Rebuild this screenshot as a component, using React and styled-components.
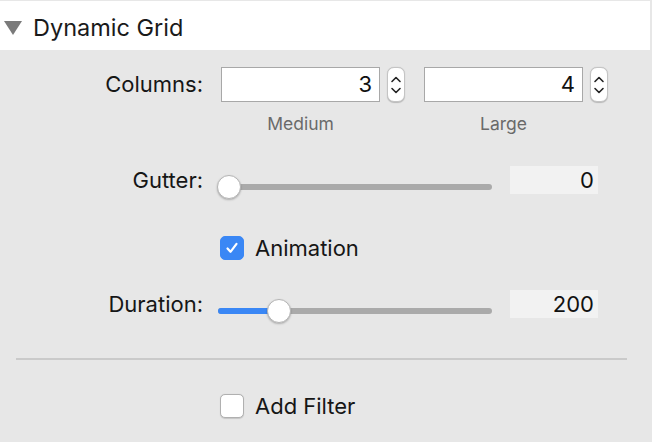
import React from "react";
import styled, { createGlobalStyle } from "styled-components";

const Global = createGlobalStyle`
  html, body { margin: 0; padding: 0; background: #e7e7e7; }
  body { font-family: Inter, "Noto Sans", "Liberation Sans", sans-serif; color: #1c1c1c; }
`;

const Page = styled.div`
  width: 652px;
  height: 442px;
  overflow: hidden;
  background: #e7e7e7;
`;

const Header = styled.div`
  margin: 1px 2px 0 0;
  height: 49px;
  background: #ffffff;
  display: flex;
  align-items: center;
  padding-left: 4px;
  gap: 11px;
`;

const Disclosure = styled.svg`
  width: 18px;
  height: 14px;
  margin-top: 4px;
`;

const Title = styled.span`
  font-size: 23.5px;
  color: #1a1a1a;
  margin-top: 3px;
`;

const Body = styled.div`
  display: flex;
  flex-direction: column;
`;

const Row = styled.div`
  display: grid;
  grid-template-columns: 203px auto;
  column-gap: 15px;
  align-items: start;
  margin-top: ${(p) => p.$mt}px;
`;

const Label = styled.div`
  text-align: right;
  font-size: 22px;
  line-height: ${(p) => p.$lh || 28}px;
  color: #161616;
`;

const Controls = styled.div`
  display: flex;
  align-items: ${(p) => p.$align || "center"};
`;

const NumberField = styled.div`
  width: 159px;
  height: 35px;
  box-sizing: border-box;
  border: 1px solid #a8a8a8;
  background: #fff;
  font-size: 22px;
  line-height: 33px;
  text-align: right;
  padding-right: 7px;
  margin-left: ${(p) => p.$ml || 0}px;
  color: #111;
`;

const StepperBox = styled.div`
  width: 18px;
  height: 35px;
  box-sizing: border-box;
  border-radius: 7px;
  background: #fff;
  border: 1px solid #c4c4c4;
  box-shadow: 0 0.5px 1px rgba(0, 0, 0, 0.2);
  display: flex;
  align-items: center;
  justify-content: center;
  margin-left: 7px;
  margin-right: ${(p) => p.$mr || 0}px;
`;

const Stepper = ({ mr }) => (
  <StepperBox $mr={mr}>
    <svg width="12" height="26" viewBox="0 0 12 26">
      <path d="M2 9.5 L6 5.5 L10 9.5" fill="none" stroke="#222" strokeWidth="1.6" strokeLinecap="round" strokeLinejoin="round" />
      <path d="M2 16.5 L6 20.5 L10 16.5" fill="none" stroke="#222" strokeWidth="1.6" strokeLinecap="round" strokeLinejoin="round" />
    </svg>
  </StepperBox>
);

const Captions = styled.div`
  display: flex;
  margin-top: 12px;
  margin-left: 221px;
`;

const Caption = styled.div`
  width: 159px;
  text-align: center;
  font-size: 17.5px;
  line-height: 20px;
  color: #6a6a6a;
  margin-right: ${(p) => p.$mr || 0}px;
`;

const SliderWrap = styled.div`
  position: relative;
  width: 274px;
  height: 34px;
`;

const Track = styled.div`
  position: absolute;
  left: 0;
  right: 0;
  top: 18px;
  height: 6px;
  border-radius: 3px;
  background: #aaaaaa;
`;

const Fill = styled.div`
  position: absolute;
  left: 0;
  top: 18px;
  height: 6px;
  border-radius: 3px;
  background: #3a87f5;
`;

const Thumb = styled.div`
  position: absolute;
  top: 9px;
  width: 24px;
  height: 24px;
  box-sizing: border-box;
  border-radius: 50%;
  background: #fff;
  border: 1px solid #b5b5b5;
  box-shadow: 0 1px 2px rgba(0, 0, 0, 0.25);
`;

const Slider = ({ value, max }) => {
  const pos = -1 + (value / max) * 252;
  return (
    <SliderWrap>
      <Track />
      {value > 0 && <Fill style={{ width: pos + 12 }} />}
      <Thumb style={{ left: pos }} />
    </SliderWrap>
  );
};

const ValueBox = styled.div`
  width: 88px;
  height: 28px;
  box-sizing: border-box;
  background: #f2f2f2;
  font-size: 22px;
  line-height: 28px;
  text-align: right;
  padding-right: 4px;
  margin-left: 18px;
  color: #111;
`;

const CheckRow = styled.label`
  display: flex;
  align-items: center;
  gap: 11px;
  margin-left: 220px;
  margin-top: ${(p) => p.$mt}px;
  font-size: 22px;
  line-height: 24px;
  height: 24px;
  color: #161616;
`;

const Box = styled.span`
  width: 24px;
  height: 24px;
  box-sizing: border-box;
  border-radius: 5px;
  display: flex;
  align-items: center;
  justify-content: center;
  background: ${(p) => (p.$on ? "#3a87f5" : "#ffffff")};
  border: 1px solid ${(p) => (p.$on ? "#3a87f5" : "#b0b0b0")};
  box-shadow: ${(p) => (p.$on ? "none" : "0 0.5px 1px rgba(0,0,0,0.15)")};
`;

const Checkbox = ({ on }) => (
  <Box $on={on}>
    {on && (
      <svg width="16" height="16" viewBox="0 0 16 16">
        <path d="M3.5 8.5 L6.5 11.8 L12.5 3.8" fill="none" stroke="#fff" strokeWidth="2.2" strokeLinecap="round" strokeLinejoin="round" />
      </svg>
    )}
  </Box>
);

const Separator = styled.div`
  height: 2px;
  background: #cacaca;
  margin: 34px 25px 0 16px;
`;

export default function App() {
  return (
    <Page>
      <Global />
      <Header>
        <Disclosure viewBox="0 0 18 14">
          <path d="M0 0 H18 L9 14 Z" fill="#7a7a7a" />
        </Disclosure>
        <Title>Dynamic Grid</Title>
      </Header>
      <Body>
        <Row $mt={17}>
          <Label $lh={35}>Columns:</Label>
          <Controls>
            <NumberField $ml={3}>3</NumberField>
            <Stepper mr={19} />
            <NumberField>4</NumberField>
            <Stepper />
          </Controls>
        </Row>
        <Captions>
          <Caption $mr={44}>Medium</Caption>
          <Caption>Large</Caption>
        </Captions>
        <Row $mt={32}>
          <Label>Gutter:</Label>
          <Controls $align="flex-start">
            <Slider value={0} max={1000} />
            <ValueBox>0</ValueBox>
          </Controls>
        </Row>
        <CheckRow $mt={36}>
          <Checkbox on />
          Animation
        </CheckRow>
        <Row $mt={30}>
          <Label>Duration:</Label>
          <Controls $align="flex-start">
            <Slider value={200} max={1000} />
            <ValueBox>200</ValueBox>
          </Controls>
        </Row>
        <Separator />
        <CheckRow $mt={34}>
          <Checkbox />
          Add Filter
        </CheckRow>
      </Body>
    </Page>
  );
}
